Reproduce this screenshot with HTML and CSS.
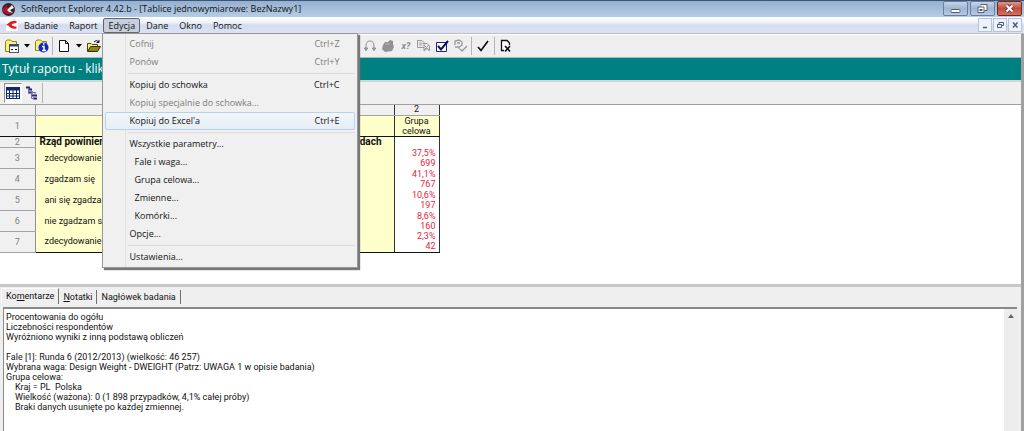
FILE: index.html
```html
<!DOCTYPE html>
<html lang="pl">
<head>
<meta charset="utf-8">
<title>SoftReport Explorer 4.42.b</title>
<link rel="stylesheet" href="styles.css">
</head>
<body>
<div class="window">
  <header class="titlebar">
    <svg class="app-icon" viewBox="0 0 15 15" aria-hidden="true"><circle cx="7.500" cy="7.500" r="6.500" fill="#3b2226"/><path d="M1 8L6 3V6L10 5L7 9L11 12L5 12Z" fill="#b3142d"/><path d="M6 8L11 3L13 6L9 8L12 11L8 10Z" fill="#f2eeee"/></svg>
    <h1 class="title">SoftReport Explorer 4.42.b - [Tablice jednowymiarowe: BezNazwy1]</h1>
    <div class="caption-buttons">
      <button class="cap" aria-label="Minimalizuj"><svg viewBox="0 0 22 13"><rect x="6.500" y="7.500" width="9" height="3" rx="1" fill="#fff" stroke="#555c6c"/></svg></button>
      <button class="cap" aria-label="Przywróć"><svg viewBox="0 0 22 13"><path d="M9 2.500H15.500V8.500H13M6.500 5H12.500V10.500H6.500Z" fill="#fff" stroke="#555c6c"/><rect x="8.500" y="7.500" width="2" height="1" fill="#fff" stroke="#555c6c"/></svg></button>
      <button class="cap cap-close" aria-label="Zamknij"><svg viewBox="0 0 22 13"><path d="M8 3.500L14 9.500M14 3.500L8 9.500" stroke="#6b3a3a" stroke-width="4"/><path d="M8 3.500L14 9.500M14 3.500L8 9.500" stroke="#fff" stroke-width="2.200"/></svg></button>
    </div>
  </header>

  <nav class="menubar">
    <svg class="doc-icon" viewBox="0 0 12 12" aria-hidden="true"><rect width="12" height="12" fill="#fff"/><path d="M10.500 2Q5 1 2 4.500L0 6L2.500 6.500Q5 10.500 10.500 9.500V7.500Q6.500 7.500 5.500 5.500Q7 4 10.500 4Z" fill="#f0141e"/></svg>
    <button class="menu-name">Badanie</button>
    <button class="menu-name">Raport</button>
    <div class="menu-holder">
      <button class="menu-name menu-open" aria-expanded="true">Edycja</button>
      <div class="dropdown" role="menu">
        <button class="item" role="menuitem" disabled><span>Cofnij</span><span class="key">Ctrl+Z</span></button>
        <button class="item" role="menuitem" disabled><span>Ponów</span><span class="key">Ctrl+Y</span></button>
        <hr class="sep">
        <button class="item" role="menuitem"><span>Kopiuj do schowka</span><span class="key">Ctrl+C</span></button>
        <button class="item" role="menuitem" disabled><span>Kopiuj specjalnie do schowka...</span></button>
        <button class="item item-hot" role="menuitem"><span>Kopiuj do Excel'a</span><span class="key">Ctrl+E</span></button>
        <hr class="sep">
        <button class="item" role="menuitem">Wszystkie parametry...</button>
        <button class="item item-sub" role="menuitem">Fale i waga...</button>
        <button class="item item-sub" role="menuitem">Grupa celowa...</button>
        <button class="item item-sub" role="menuitem">Zmienne...</button>
        <button class="item item-sub" role="menuitem">Komórki...</button>
        <button class="item" role="menuitem">Opcje...</button>
        <hr class="sep">
        <button class="item" role="menuitem">Ustawienia...</button>
      </div>
    </div>
    <button class="menu-name">Dane</button>
    <button class="menu-name">Okno</button>
    <button class="menu-name">Pomoc</button>
    <div class="mdi-buttons">
      <button class="mdi" aria-label="Minimalizuj raport"><svg viewBox="0 0 12 12"><path d="M4 8.500H8" stroke="#4d5b78" stroke-width="1.500"/></svg></button>
      <button class="mdi" aria-label="Przywróć raport"><svg viewBox="0 0 12 12"><path d="M5 5V3.500H9.500V6.500H8M3.500 5.500H7.500V8.500H3.500Z" fill="none" stroke="#4d5b78"/></svg></button>
      <button class="mdi" aria-label="Zamknij raport"><svg viewBox="0 0 12 12"><path d="M4 3.500L8.500 8.500M8.500 3.500L4 8.500" stroke="#4d5b78" stroke-width="1.500"/></svg></button>
    </div>
  </nav>

  <div class="client">
    <div class="toolbar">
      <div class="tools-left">
        <button class="tool" aria-label="Otwórz badanie"><svg viewBox="0 0 14 14"><path d="M.5 12.500V2.500L2 1H5.500L7 2.500H11.500V12.500Z" fill="#fbf27a" stroke="#8a8326"/><rect x="4.500" y="5.500" width="9" height="8" fill="#fff" stroke="#555"/><path d="M4.500 6.500H13.500" stroke="#26457c" stroke-width="2"/><path d="M6 10.500H8M10 10.500H12" stroke="#111"/></svg></button>
        <button class="arrow" aria-label="Lista badań"><svg viewBox="0 0 6 4"><path d="M0 0H6L3 3.500Z"/></svg></button>
        <button class="tool" aria-label="Informacje o badaniu"><svg viewBox="0 0 14 14"><path d="M.5 11.500V2.500L2 1H5.500L7 2.500H11.500V11.500Z" fill="#fbf27a" stroke="#8a8326"/><circle cx="8.500" cy="8.500" r="5" fill="#1028c8"/><path d="M7 7.500H9V11.500M7 11.500H11M8 5H9.500" stroke="#fff" stroke-width="1.500" fill="none"/></svg></button>
        <span class="bar"></span>
        <button class="tool" aria-label="Nowy raport"><svg viewBox="0 0 14 14"><path d="M2.500 1.500H8.500L11.500 4.500V12.500H2.500Z" fill="#fff" stroke="#111"/><path d="M8.500 1.500V4.500H11.500" fill="none" stroke="#111"/></svg></button>
        <button class="arrow" aria-label="Rodzaj raportu"><svg viewBox="0 0 6 4"><path d="M0 0H6L3 3.500Z"/></svg></button>
        <button class="tool" aria-label="Otwórz raport"><svg viewBox="0 0 14 14"><path d="M.5 12V4.500H4L5 5.500H10.500V7" fill="#fbf27a" stroke="#4b4710"/><path d="M.5 12.500L3.500 7.500H13.500L10.500 12.500Z" fill="#8d8420" stroke="#333008"/><path d="M7 3Q9 0 12 3M12 1V3.500H9.500" fill="none" stroke="#111"/></svg></button>
      </div>
      <div class="tools-right">
        <button class="tool" aria-label="Kody" disabled><svg viewBox="0 0 14 14"><path d="M3 11V7Q3 2 7 2Q11 2 11 7V11" fill="none" stroke="#929292"/><path d="M1 9.500H5M9 9.500H13M3 12V8M11 12V8" stroke="#929292" stroke-width="1.500"/></svg></button>
        <button class="tool" aria-label="Grupa" disabled><svg viewBox="0 0 14 14"><path d="M2 6L4 3L7 3L9 1L12 2V5L13 8L11 12L4 13L1 10Z" fill="#929292"/><path d="M4 5H9" stroke="#bbb"/></svg></button>
        <button class="tool tool-text" aria-label="Warunek" disabled>x?</button>
        <button class="tool" aria-label="Kopiuj zmienne" disabled><svg viewBox="0 0 14 14"><path d="M.5 1.500H5L7 3.500V8.500H.5ZM5.500 4.500H10L12.500 7V12L10 9.500L7 12V8" fill="#eee" stroke="#999"/><path d="M2 4H5M2 6H5M7 6L12 11M12 6L7 11" stroke="#999"/></svg></button>
        <button class="tool" aria-label="Zaznacz"><svg viewBox="0 0 14 14"><path d="M1.500 3.500H11.500V12.500H1.500Z" fill="#fff" stroke="#222278"/><path d="M3 7L6 10.500L13 2" fill="none" stroke="#10106c" stroke-width="2"/></svg></button>
        <button class="tool" aria-label="Sprawdź zmienną" disabled><svg viewBox="0 0 14 14"><path d="M2 6V2L6 1L9 3V6L6 8H2M4 4H7M6 8V10M7 10L9 12L14 7" fill="none" stroke="#999" stroke-width="1.300"/></svg></button>
        <span class="bar"></span>
        <button class="tool" aria-label="Zatwierdź"><svg viewBox="0 0 14 14"><path d="M2 8L5 11.500L12 2" fill="none" stroke="#111" stroke-width="1.700"/></svg></button>
        <span class="bar"></span>
        <button class="tool" aria-label="Zamknij dokument"><svg viewBox="0 0 14 14"><path d="M5 11.500H2.500V1.500H8L10.500 4V6" fill="#fff" stroke="#111" stroke-width="1.300"/><path d="M6 7L11 12.500M11 7L6 12.500" stroke="#111" stroke-width="1.600"/></svg></button>
      </div>
    </div>

    <h2 class="report-title">Tytuł raportu - kliknij</h2>

    <div class="viewbar">
      <button class="view view-on" aria-label="Tabela"><svg viewBox="0 0 14 14"><rect x=".5" y="1.500" width="13" height="11" fill="#fff" stroke="#12286c"/><path d="M0 3H14" stroke="#12286c" stroke-width="3"/><path d="M0 7.500H14M0 10H14M3.500 3V13M7 3V13M10.500 3V13" stroke="#12286c"/></svg></button>
      <button class="view" aria-label="Drzewo"><svg viewBox="0 0 14 14"><path d="M1 1.500H5M3 3.500H7M3 6.500H8M7 9.500H12M8 12.500H12" stroke="#28246e" stroke-width="2"/><path d="M3.500 2V7M6.500 4V12.500H9M7 6.500H11M10 6V8" fill="none" stroke="#7470b0"/></svg></button>
      <span class="bar"></span>
    </div>

    <main class="sheet">
      <table class="grid">
        <colgroup><col class="c-num"><col class="c-label"><col class="c-value"></colgroup>
        <thead>
          <tr class="r-cols"><th></th><th></th><th>2</th></tr>
          <tr class="r-group"><th>1</th><td class="label"></td><td class="group">Grupa<br>celowa</td></tr>
        </thead>
        <tbody>
          <tr class="r-question"><th>2</th><td class="label"><div class="question"><span>Rząd powinien</span><span>dochodach</span></div></td><td></td></tr>
          <tr class="r-data"><th>3</th><td class="label answer">zdecydowanie się</td><td class="value">37,5%<br>699</td></tr>
          <tr class="r-data"><th>4</th><td class="label answer">zgadzam się</td><td class="value">41,1%<br>767</td></tr>
          <tr class="r-data"><th>5</th><td class="label answer">ani się zgadzam</td><td class="value">10,6%<br>197</td></tr>
          <tr class="r-data"><th>6</th><td class="label answer">nie zgadzam się</td><td class="value">8,6%<br>160</td></tr>
          <tr class="r-data"><th>7</th><td class="label answer">zdecydowanie się</td><td class="value">2,3%<br>42</td></tr>
        </tbody>
      </table>
    </main>

    <section class="notes">
      <div class="tabs" role="tablist">
        <button class="tab tab-on" role="tab" aria-selected="true">Ko<u>m</u>entarze</button>
        <button class="tab" role="tab"><u>N</u>otatki</button>
        <button class="tab" role="tab">Nagłówek badania</button>
      </div>
      <div class="comment-box">
        <textarea class="comments" aria-label="Komentarze" readonly>Procentowania do ogółu
Liczebności respondentów
Wyróżniono wyniki z inną podstawą obliczeń

Fale [1]: Runda 6 (2012/2013) (wielkość: 46 257)
Wybrana waga: Design Weight - DWEIGHT (Patrz: UWAGA 1 w opisie badania)
Grupa celowa:
    Kraj = PL  Polska
    Wielkość (ważona): 0 (1 898 przypadków, 4,1% całej próby)
    Braki danych usunięte po każdej zmiennej.</textarea>
        <div class="scroll"><button class="scroll-up" aria-label="W górę"><svg viewBox="0 0 6 4"><path d="M0 4L3 0L6 4Z" fill="#666"/></svg></button></div>
      </div>
    </section>
  </div>
</div>
</body>
</html>
```
FILE: styles.css
```css
* { box-sizing: border-box; }
body { margin: 0; font: 9px/10px Roboto, "Liberation Sans", Arial, sans-serif; color: #111; }
button { margin: 0; padding: 0; border: 0; background: none; font: inherit; color: inherit; }
svg { display: block; }
h1, h2 { margin: 0; font-weight: normal; }

.window { display: flex; flex-direction: column; height: 100vh; overflow: hidden; background: #efefef; }

.titlebar {
  display: flex; align-items: center; gap: 5px; height: 17px; padding: 0 2px 0 1px; flex: none;
  border-top: 1px solid #3d5677;
  background: linear-gradient(#95b0cf, #b6cde6);
}
.app-icon { width: 15px; height: 15px; }
.title { font: 9px/14px "Open Sans", "Noto Sans", sans-serif; white-space: nowrap; }
.caption-buttons { display: flex; gap: 2px; margin-left: auto; align-self: flex-start; }
.cap { width: 25px; height: 15px; border: 1px solid #6c7f9a; border-radius: 2px; background: linear-gradient(#c4d5e8, #9db6d2 50%, #b5cbe2); }
.cap svg { width: 23px; height: 13px; }
.cap-close { border-color: #6d2a25; background: linear-gradient(#dd988b, #c54a39 50%, #d5705e); }

.menubar {
  display: flex; align-items: center; height: 17px; padding: 0 2px 0 6px; flex: none;
  border-bottom: 1px solid #bebfc6;
  background: linear-gradient(#ffffff, #eef1fa 35%, #d5dcef 50%, #dce2f4);
  font: 9px/14px "Open Sans", "Noto Sans", sans-serif;
}
.doc-icon { width: 12px; height: 12px; }
.menu-name { height: 15px; padding: 0 4px 0 5px; border: 1px solid transparent; border-radius: 2px; }
.menu-open { border-color: #626670; background: #c9cedd; }
.menu-holder { position: relative; }
.mdi-buttons { display: flex; gap: 1px; margin-left: auto; }
.mdi { width: 14px; height: 14px; border: 1px solid #b4c4dd; background: #eef3fb; }
.mdi svg { width: 12px; height: 12px; }

.dropdown {
  position: absolute; z-index: 2; top: 100%; left: -1px; width: 256px; padding: 1px 2px 1px;
  border: 1px solid #979797; box-shadow: 2px 2px 1px #777;
  background: linear-gradient(90deg, #f0f0f0 22px, #e1e1e1 22px, #e1e1e1 23px, #f0f0f0 23px);
}
.item { display: flex; align-items: center; justify-content: space-between; width: 100%; height: 18px; padding: 0 14px 0 24px; border: 1px solid transparent; border-radius: 2px; text-align: left; white-space: nowrap; }
.item:disabled { color: #7c7c7c; }
.item-sub { justify-content: flex-start; padding-left: 29px; }
.item-hot { border-color: #b5d3ef; background: linear-gradient(#f3f6fa, #e5edf6); }
.sep { height: 1px; margin: 2px 0 2px 23px; border: 0; background: #dcdcdc; }

.client { display: flex; flex-direction: column; flex: 1; min-height: 0; border-right: 3px solid #a0a0a0; }

.toolbar { display: flex; align-items: center; height: 24px; flex: none; padding-left: 5px; border-top: 1px solid #fff; border-bottom: 1px solid #a8b8b8; }
.tools-left { display: flex; align-items: center; width: 358px; }
.tools-right { display: flex; align-items: center; gap: 4px; }
.tool { width: 14px; height: 14px; flex: none; }
.tool svg { width: 14px; height: 14px; }
.tool-text { color: #8c8c8c; font-weight: bold; font-style: italic; }
.arrow { display: flex; justify-content: center; width: 16px; }
.arrow svg { width: 6px; height: 4px; }
.bar { width: 1px; height: 18px; background: #b4b4b4; }
.tools-left .bar { margin: 0 4px 0 3px; }

.report-title { height: 22px; flex: none; padding-left: 2px; background: #008080; color: #fff; font: 12px/22px "Open Sans", "Noto Sans", sans-serif; }

.viewbar { display: flex; align-items: center; gap: 1px; height: 25px; flex: none; padding-left: 4px; border-top: 2px solid #d4d4d4; border-bottom: 1px solid #a0a0a0; }
.view { display: flex; align-items: center; justify-content: center; width: 18px; height: 20px; }
.view svg { width: 14px; height: 14px; }
.view-on { border: 1px solid; border-color: #909090 #fff #fff #909090; background: #f8f8f8; }
.viewbar .bar { height: 20px; }

.sheet { flex: none; height: 179px; background: #fff; }
.grid { border-collapse: collapse; table-layout: fixed; width: 439px; }
.c-num { width: 35px; }
.c-label { width: 359px; }
.c-value { width: 45px; }
.grid th, .grid td { padding: 0; border-right: 1px solid #333; }
.grid th { border-right-color: #909090; border-bottom: 1px solid #a4a4a4; background: #f0f0f0; color: #808080; font-weight: normal; text-align: center; }
.grid .r-cols th { height: 10px; line-height: 9px; border-right-color: #333; color: #222; }
.grid .r-cols th:first-child { border-right-color: #909090; }
.r-group { height: 21px; }
.r-question { height: 10px; }
.r-data { height: 21px; }
.grid .r-group th, .grid .r-group td, .grid tr:last-child td { border-bottom: 1px solid #111; }
.grid .label { background: #ffffcc; }
.grid .group { background: #ffffcc; text-align: center; }
.question { display: flex; justify-content: space-between; height: 10px; overflow: hidden; padding: 0 12px 0 4px; font-size: 10px; font-weight: bold; }
.grid .answer { padding-left: 9px; }
.grid .value { padding-right: 3px; color: #e8243c; text-align: right; }

.notes { display: flex; flex-direction: column; flex: 1; min-height: 0; border-top: 3px solid #c8c8c8; }
.tabs { display: flex; align-items: flex-end; height: 20px; flex: none; padding: 0 0 3px 1px; }
.tab { height: 14px; padding: 0 4px; border-right: 1px solid #707070; }
.tab-on { height: 16px; padding-bottom: 2px; border-top: 1px solid #fff; border-left: 1px solid #fff; }
.comment-box { display: flex; flex: 1; min-height: 0; margin: 0 4px 0 3px; border-top: 2px solid #8a8a8a; border-left: 1px solid #8a8a8a; background: #fff; }
.comments { flex: 1; padding: 3px 2px; border: 0; outline: 0; resize: none; overflow: hidden; background: #fff; color: #111; font: inherit; }
.scroll { width: 13px; background: #ededed; }
.scroll-up { display: flex; align-items: center; justify-content: center; width: 13px; height: 14px; }
.scroll-up svg { width: 6px; height: 4px; }
```
